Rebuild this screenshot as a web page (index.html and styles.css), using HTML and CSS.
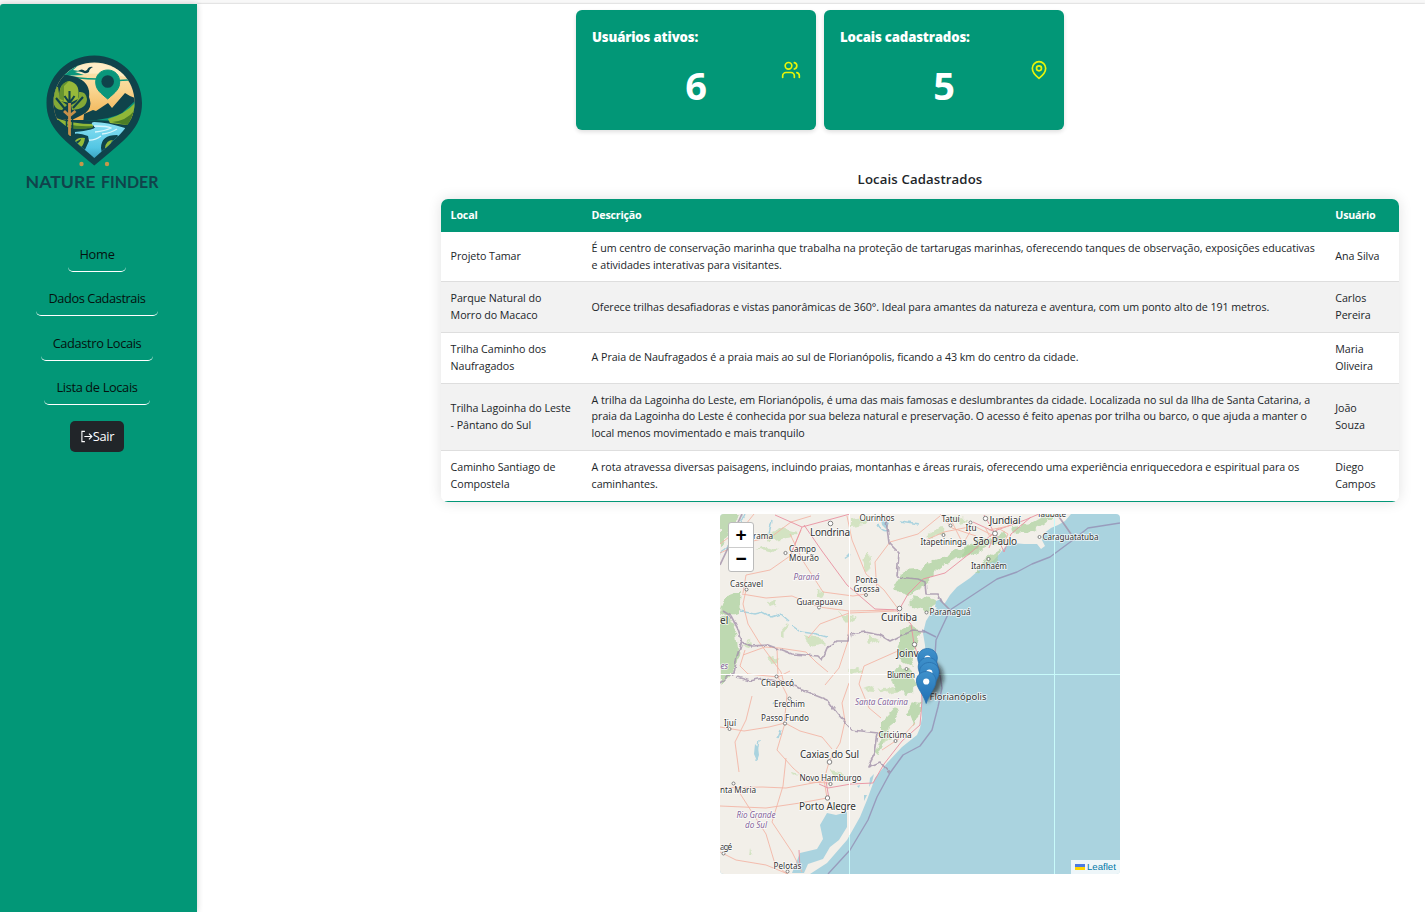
FILE: index.html
```html
<!DOCTYPE html>
<html lang="pt-BR">
<head>
<meta charset="utf-8">
<title>Nature Finder</title>
<link rel="stylesheet" href="styles.css">
</head>
<body>
<div class="app">
  <aside class="sidebar">
    <svg class="logo" viewBox="20 50 145 145" width="145" height="145">
      <defs>
        <clipPath id="pin"><path d="M94.300 62.500C72 62.500 53.500 80 53.500 102C53.500 122 64 132 94.300 158C124 132 134.500 122 134.500 102C134.500 80 117 62.500 94.300 62.500Z"/></clipPath>
        <linearGradient id="sky" x1="0" y1="0" x2="0" y2="1"><stop offset="0" stop-color="#fbe9bd"/><stop offset=".5" stop-color="#f9d590"/><stop offset="1" stop-color="#f0b04e"/></linearGradient>
        <linearGradient id="water" x1="0" y1="0" x2="0" y2="1"><stop offset="0" stop-color="#8be0f2"/><stop offset=".6" stop-color="#53c6e4"/><stop offset="1" stop-color="#2b8ea6"/></linearGradient>
      </defs>
      <path fill="#0f434b" d="M94.300 55.500C67 55.500 46.500 77 46.500 103C46.500 128 63 139 94.300 165.500C126 139 142 128 142 103C142 77 121 55.500 94.300 55.500Z"/>
      <g clip-path="url(#pin)">
        <rect x="50" y="60" width="90" height="60" fill="url(#sky)"/>
        <path fill="#fff1cf" opacity=".7" d="M68 70q30-14 54 2l4 5q-35-8-62 2z"/>
        <path fill="none" stroke="#0a967b" stroke-width="1.500" d="M64 75q14 4 33 4M118 80.500l10-.5"/>
        <path fill="#0a967b" d="M62 76q9-10 19-13l-8 7q5 1 9 1l-7 1q6 2 9 3z"/>
        <path fill="#0f434b" d="M78 71q4-3 7 0l2-1q2-4 6-3q-4 2-4 5q-3 2-5 1q-2-1-6-2z"/>
        <path fill="#0f434b" d="M84 114l9-4 3 1 12-8 4 5 13-15 5 3 8 3v11l-24 11-31 3z"/>
        <path fill="#0a967b" d="M76 121q30 0 46-8l13-12v9l-16 13-28 2z"/>
        <path fill="#0f434b" d="M75 121q33-2 58 2l-10 34H60l-7-36z"/>
        <path fill="#8fb738" d="M108 119q17-5 27-16v14l-8 8-17-2z"/>
        <path fill="#4c7d27" d="M112 122q14-1 22-11v8l-7 6z"/>
        <path fill="#8fb738" d="M56 118q17 6 37 6l0 3q-15 3-26 0z"/>
        <path fill="#487e2c" d="M66 124q14 3 27 2l-1 2q-14 2-21 0z"/>
        <path fill="url(#water)" d="M94 122q-5 1 1 5q0 3-20 5v22l19 11 31-29 0-8q-18-6-31-6z"/>
        <path fill="none" stroke="#d8f6fc" stroke-width="1.300" d="M94 126q14 0 17 2q-6 3-16 4M117 129q-6 4-15 5M101 136q-7 5-13 4"/>
        <path fill="#0f434b" d="M68 136q8-5 20 0l1 5-6 13-17-8zM101 148q0-13 16-13l5 4-20 15z"/>
        <path fill="#94ba38" d="M74 143q2-6 11-5q-1 7-4 9l-4-3q4-3 4-5l-7 4zM105 148q1-8 8-8q-3 3-2 5q-2 2-4 3z"/>
        <path fill="#0f434b" d="M49 83q7-9 18-8l9 2q15 6 13 20q5 12-7 18l-8 4-12 1-12-4z"/>
        <path fill="#97b93a" d="M60 101q-3-17 9-20q12 2 9 18l-8 4z"/>
        <path fill="#65932f" d="M60 99q-2-16 9-18l-5 5v15z"/>
        <path fill="#83a936" d="M53 90q2-4 5-3l2 13 7 5-5 5q-9 0-9-12zM79 92q7-1 8 7q0 10-15 11l-1-5q8-2 8-13z"/>
        <path fill="none" stroke="#0f434b" stroke-width="2.100" d="M69.500 91v14M64.500 96l5 7 5-7M56 98l9 11M83 97l-10 11"/>
        <path fill="none" stroke="#c6914b" stroke-width="2.800" d="M69.500 103v33M64 111l5.500 5 6-5"/>
        <path fill="none" stroke="#0f434b" stroke-width="1.500" d="M66.500 117v19M72.500 118v15"/>
      </g>
      <path fill="#0a967b" stroke="#0a967b" d="M107.700 70c-7 0-12 5-12 12 0 8 5 11 12 17 8-7 12-10 12-17 0-7-5-12-12-12z"/>
      <circle cx="107.700" cy="81.500" r="6.300" fill="#0f434b"/>
      <circle cx="81.500" cy="164" r="2.200" fill="#c6974b"/><circle cx="107" cy="164" r="2.200" fill="#c6974b"/>
      <text class="logo-word" x="25.500" y="188.300" textLength="70" lengthAdjust="spacingAndGlyphs">NATURE</text>
      <text class="logo-word" x="101" y="188.300" textLength="57.500" lengthAdjust="spacingAndGlyphs">FINDER</text>
    </svg>
    <nav class="nav">
      <a class="link home">Home</a>
      <a class="link dados">Dados Cadastrais</a>
      <a class="link cadastro">Cadastro Locais</a>
      <a class="link lista">Lista de Locais</a>
      <button class="exit"><svg viewBox="0 0 24 24" width="13" height="13" fill="none" stroke="#fff" stroke-width="2"><path d="M9 2.500H3.500v19H9M8 12h14M16.500 6.500L22 12l-5.500 5.500"/></svg><span>Sair</span></button>
    </nav>
  </aside>
  <main class="content">
    <section class="cards">
      <div class="card">
        <h2>Usuários ativos:</h2>
        <p>6</p>
        <svg class="ico" viewBox="0 0 24 24"><path d="M16 21v-2a4 4 0 0 0-4-4H6a4 4 0 0 0-4 4v2"/><circle cx="9" cy="7" r="4"/><path d="M22 21v-2a4 4 0 0 0-3-3.870M16 3.130a4 4 0 0 1 0 7.750"/></svg>
      </div>
      <div class="card">
        <h2>Locais cadastrados:</h2>
        <p>5</p>
        <svg class="ico" viewBox="0 0 24 24"><path d="M20 10c0 6-8 12-8 12s-8-6-8-12a8 8 0 0 1 16 0Z"/><circle cx="12" cy="10" r="3"/></svg>
      </div>
    </section>
    <section class="places">
      <h1>Locais Cadastrados</h1>
      <table class="table">
        <colgroup><col class="c1"><col class="c2"><col class="c3"></colgroup>
        <thead><tr><th>Local</th><th>Descrição</th><th>Usuário</th></tr></thead>
        <tbody>
          <tr><td>Projeto Tamar</td><td>É um centro de conservação marinha que trabalha na proteção de tartarugas marinhas, oferecendo tanques de observação, exposições educativas<br>e atividades interativas para visitantes.</td><td>Ana Silva</td></tr>
          <tr><td>Parque Natural do<br>Morro do Macaco</td><td>Oferece trilhas desafiadoras e vistas panorâmicas de 360°. Ideal para amantes da natureza e aventura, com um ponto alto de 191 metros.</td><td>Carlos<br>Pereira</td></tr>
          <tr><td>Trilha Caminho dos<br>Naufragados</td><td>A Praia de Naufragados é a praia mais ao sul de Florianópolis, ficando a 43 km do centro da cidade.</td><td>Maria<br>Oliveira</td></tr>
          <tr><td>Trilha Lagoinha do Leste<br>- Pântano do Sul</td><td>A trilha da Lagoinha do Leste, em Florianópolis, é uma das mais famosas e deslumbrantes da cidade. Localizada no sul da Ilha de Santa Catarina, a<br>praia da Lagoinha do Leste é conhecida por sua beleza natural e preservação. O acesso é feito apenas por trilha ou barco, o que ajuda a manter o<br>local menos movimentado e mais tranquilo</td><td>João<br>Souza</td></tr>
          <tr><td>Caminho Santiago de<br>Compostela</td><td>A rota atravessa diversas paisagens, incluindo praias, montanhas e áreas rurais, oferecendo uma experiência enriquecedora e espiritual para os<br>caminhantes.</td><td>Diego<br>Campos</td></tr>
        </tbody>
      </table>
      <div class="map">
        <svg class="tiles" viewBox="720 514 400 360" width="400" height="360">
          <defs>
            <linearGradient id="mk" x1="0" y1="0" x2="0" y2="1"><stop offset="0" stop-color="#3f91cb"/><stop offset="1" stop-color="#1f6fb5"/></linearGradient>
            <filter id="soft" x="-50%" y="-50%" width="200%" height="200%"><feGaussianBlur stdDeviation="2.200"/></filter>
            <filter id="rough" x="-5%" y="-5%" width="110%" height="110%"><feTurbulence type="fractalNoise" baseFrequency=".12" numOctaves="2" seed="4"/><feDisplacementMap in="SourceGraphic" scale="9" xChannelSelector="R" yChannelSelector="G"/></filter>
            <filter id="wavy" filterUnits="userSpaceOnUse" x="715" y="510" width="410" height="370"><feTurbulence type="fractalNoise" baseFrequency=".15" numOctaves="2" seed="9"/><feDisplacementMap in="SourceGraphic" scale="4" xChannelSelector="R" yChannelSelector="G"/></filter>
            <g id="marker"><path fill="url(#mk)" stroke="#2a71ad" stroke-width=".8" d="M0 .5C-5.500 .5-9.800 4.700-9.800 10c0 7 7 13 9.800 22.500C2.800 23 9.800 17 9.800 10 9.800 4.700 5.500 .5 0 .5z"/><circle cy="10.500" r="3.100" fill="#fff"/></g>
          </defs>
          <rect x="720" y="514" width="400" height="360" fill="#aad3df"/>
          <path fill="#f2efe9" d="M720 514H1071L1065 521 1058 525 1051 528 1043 534 1042 540 1045 546 1041 549 1037 544 1024 544 1013 543 1005 547 1000 553 994 560 980 569 970 578 957 587 950 595 945 603 938 607 931 613 926 621 923 633 925 645 926 660 926 680 922 690 921 705 922 718 920 728 917 735 902 747 887 763 875 778 867 800 860 817 847 840 827 863 810 874H720Z"/>
          <g fill="#add19e" filter="url(#rough)">
            <path opacity=".75" d="M720 615l10 2 7 15 2 18-4 20-15 16zM720 611l5-14 16-6-2 22-10 2zM898 579l6-8 14-1 12-8 13-4 8 3-15 11-14 15-16 9-13-8zM920 567l18-7 20-11 16-5 6 2-12 8-25 10-23 11zM900 630l11-5 10 6-3 15-8 10 4 10-9-4-10-8 5-10zM913 703l8 2-2 13-7 7-5-12z"/>
            <path opacity=".7" d="M720 514h20l-8 14-12 20zM911 594l20 4 8 5-13 8-14-4zM900 664l12 8 5 14-9 8-12-4-6-12zM881 722l9-9 7-8 2 8-9 14-5 14-7 13-3-3 6-14zM964 545l30-8 10-4 3 4-20 11-24 9zM981 562l20-14-6 14-20 10zM1013 526l16-3 13-7 14-2-11 9-14 9-15 2z"/>
          </g>
          <g fill="#c8dfb5" opacity=".75" filter="url(#rough)">
            <path d="M764 536l18-8 16 4-6 5-24 4zM755 549l12-3 12 4-5 3zM768 601l8-1 2 4-8 2zM818 590l7 2-3 5-5-2zM804 635l16 3 8 8-10-2-9 2zM780 632l7-8-2 8-5 5zM850 520l20-3-6 8-14 2zM860 560l10-8 2 14-8 4zM838 612l18 6-8 5zM868 635l10 5-8 5zM768 656l12 4-9 2zM742 645l8-4 2 7zM847 670l12-3 5 4-13 3zM878 690l14-4 8 5-12 3zM832 770l12 3 3 4-14-2zM791 772l10 2-8 2zM880 735l8-4 3 7-8 8zM862 690l10-3 3 4zM750 848l2 7-3 1zM728 843l4 2-4 2zM928 535l14-9 3 6-15 7zM950 520l12-4 4 5-12 3z"/>
          </g>
          <g fill="#aad3df">
            <path d="M827 813l9 2 11-3v15l-8 13-9 7-7 12-15 5-4 9h-12l8-20 17-4 6-10-3-14z"/>
            <path d="M755 744l3 3 1 8-2 6-3-7zM870 778l4-4-2 8-3 5zM864 795l3 0-3 6zM857 786l3-1-1 3zM936 601l5-2 3 5-4 5-5-2zM881 519l8 4-3 6-4-4zM846 556l3-3 1 3z"/>
          </g>
          <path class="river" filter="url(#wavy)" d="M740 611l14 3 8-2 10 5 9-3 8 7M792 625l10 7 14 2 11 3M878 525q6 8 10 5M772 520l-3 14M720 553q14-8 16-22l8-17M900 521l20 3M850 555l-6 4M776 699l-3 5M759 740l-3 20M781 730l-3 8"/>
          <g class="road">
            <path d="M720 553l20-9 31-7 20-15 20-6M743 593l3-18 24-5 20-14 11-26M746 590l-3 14 5 20 11 18 22 30 4 15M742 594l24 4 26-2 27 11 30 4 45-1M743 655l22-8 14 1 27 4 10 10 12 10M745 650l-5 16 8 8 30 3 12-6M777 648l1 29 9 18-3 30M752 696l-6 24-11 22 4 30M720 727l24 4 25-4 16-4 15 8 22 6 10 12M785 723l-8 27 16 18 16 14 20 1M734 784l14 22 18 28 9 30 12 10M720 788l42-1 24 1 43-8M720 806l46 2 34-5 27-5M720 852l16 8 30 5 22 9M786 758l-3 28-11 36 20 30 10 20M829 762l-5 18 3 18M829 761l11-18 5-22-3-18 7-20M897 611l-48 2-29 11-12 14M849 611l-1 30-9 27-14 17M881 718l-12-10-10-24 5-18 36-16M866 594l-13 2-30-4-20-31-13-27M877 592l-2-30 15-20 28-8 22-18M899 610l-15-20-18-16-14-34-5-24M720 544l26-20 8-10M926 540l18-8 30-6 20 10M951 520l12 24 8-14M940 514l12 14 24 8"/>
            <path d="M804 525l18 26 25 34 28 24 24 1 9-16 15-15 22-6 24-19 28-24 28-10 30-13 20-13M897 611l14 13 3 20 6 17 2 40-2 24-18 16-18 23-11 19-22 1-23 4-9-4M802 527l26-7 22-6M802 527l-27-12M802 527l-11 27M995 532l9 20 7-18 20-17M995 532l-22-10M995 532l-6 16M994 532l-10-17M829 799l-3-18M799 850l1 18" stroke="#e9909f"/>
            <path d="M882 750l21-14 12-13M985 527l5 10 8-9 10 6-4 10M989 530l20-4-6-9"/>
          </g>
          <g class="border">
            <path filter="url(#wavy)" d="M723 611l8 5 7 13 4 12-5 16-3 16-8 5-6 5M740 641L752 646 768 645 792 654 818 656 822 660 827 648 837 641 848 641 850 634 865 632 880 635 890 641 902 635 913 631 925 632M737 677L750 681 763 678 785 683 797 687 802 690 827 700 837 713 852 730 878 733 875 753 868 767 880 762 890 773M886 520L889 543 899 553 897 577 918 579 925 582 926 594 938 594 942 602"/>
            <path d="M940 600l10 10M720 565l8-17 7-19 7-15M1057 514l14 20"/>
            <path class="sea" d="M1120 523L1088 528 1073 540 1050 557 1032 564 1017 572 997 579 950 610 936 640 935 656 940 675 942 688 938 707 932 730 920 746 903 755 890 773 877 797 868 820 850 850 828 874M922 630l14 7"/>
          </g>
          <path stroke="#c8fafa" d="M1054.500 514v360M921 674.500h199M849.500 835v39"/>
          <path stroke="#fff" d="M849.500 514v321M720 674.500h201"/>
          <g class="town"><circle cx="830.500" cy="523.500" r="2.300"/><circle cx="785.500" cy="553" r="1.600"/><circle cx="746.500" cy="589.500" r="1.500"/><circle cx="819" cy="607.500" r="1.500"/><circle cx="866" cy="595" r="1.500"/><circle cx="899.500" cy="608.500" r="2.300"/><circle cx="914.500" cy="644.500" r="2.200"/><circle cx="906.500" cy="669" r="1.500"/><circle cx="776.500" cy="676.500" r="1.500"/><circle cx="789.500" cy="698.500" r="1.500"/><circle cx="785" cy="723.500" r="1.600"/><circle cx="729.500" cy="729" r="1.500"/><circle cx="895.500" cy="741" r="1.500"/><circle cx="829.500" cy="762" r="2.300"/><circle cx="830.500" cy="784" r="1.600"/><circle cx="827.500" cy="798" r="2.200"/><circle cx="733.500" cy="783.500" r="1.500"/><circle cx="787.500" cy="871.500" r="1.500"/><circle cx="723.500" cy="853.500" r="1.500"/><circle cx="926.500" cy="612.500" r="1.500"/><circle cx="995" cy="533.500" r="2.400"/><circle cx="985.500" cy="518.500" r="2.200"/><circle cx="950.500" cy="525.500" r="1.500"/><circle cx="970.500" cy="522.500" r="1.500"/><circle cx="943.500" cy="535" r="1.500"/><circle cx="988.500" cy="559" r="1.600"/><circle cx="1039.500" cy="537" r="1.500"/></g>
          <g class="lbl">
            <text x="859.500" y="520.500" textLength="35">Ourinhos</text><text x="753" y="539" textLength="20">rama</text>
            <text class="big" x="810" y="535.500" textLength="40">Londrina</text>
            <text x="789" y="552" textLength="27">Campo</text><text x="789" y="561" textLength="30">Mourão</text>
            <text x="730" y="586.500" textLength="33">Cascavel</text>
            <text x="855.500" y="582.500" textLength="22">Ponta</text><text x="853.500" y="592" textLength="26">Grossa</text>
            <text x="796.500" y="604.500" textLength="46">Guarapuava</text>
            <text class="big" x="881" y="620.500" textLength="36">Curitiba</text>
            <text class="big" x="720" y="624">el</text>
            <text class="big" x="896.500" y="657" textLength="22">Joinv</text>
            <text x="887" y="678" textLength="28">Blumen</text>
            <text x="761" y="685.500" textLength="33">Chapecó</text>
            <text x="774" y="707" textLength="31">Erechim</text>
            <text x="761" y="720.500" textLength="48">Passo Fundo</text>
            <text x="724" y="726" textLength="12">Ijuí</text>
            <text x="878.500" y="738" textLength="33">Criciúma</text>
            <text class="big" x="800" y="758" textLength="59">Caxias do Sul</text>
            <text x="799.500" y="780.500" textLength="62">Novo Hamburgo</text>
            <text x="720" y="793" textLength="36">nta Maria</text>
            <text class="big" x="799" y="809.500" textLength="57">Porto Alegre</text>
            <text x="720" y="850" textLength="12">agé</text>
            <text x="773.500" y="869" textLength="28">Pelotas</text>
            <text x="941.500" y="522" textLength="18">Tatuí</text><text x="965.500" y="531" textLength="11">Itu</text>
            <text class="big" x="989.500" y="523.500" textLength="31">Jundiaí</text>
            <text x="920.500" y="544.500" textLength="46">Itapetininga</text>
            <text class="big" x="973" y="545" textLength="44">São Paulo</text>
            <text x="971" y="568.500" textLength="36">Itanhaém</text>
            <text x="1042.500" y="539.500" textLength="56">Caraguatatuba</text>
            <text x="1037" y="516.500" textLength="29">Taubaté</text>
            <text x="929.500" y="615" textLength="41">Paranaguá</text>
            <g class="state"><text x="793.500" y="580" textLength="26">Paraná</text><text x="720.500" y="669">es</text><text x="855" y="704.500" textLength="53">Santa Catarina</text><text x="736.500" y="817.500" textLength="39">Rio Grande</text><text x="745" y="827.500" textLength="22">do Sul</text></g>
            <text class="city" x="929.500" y="700" textLength="57">Florianópolis</text>
          </g>
          <path fill="#111" opacity=".6" filter="url(#soft)" d="M926 703l4-24 5-18 7 8 2 10-5 12z"/>
          <use href="#marker" x="927.500" y="648"/><use href="#marker" x="928" y="657"/><use href="#marker" x="929.300" y="662"/><use href="#marker" x="926.200" y="671"/>
        </svg>
        <div class="zoom"><span>+</span><span>−</span></div>
        <div class="credit"><svg viewBox="0 0 12 8" width="10" height="6" preserveAspectRatio="none"><path fill="#4c7be1" d="M0 0h12v4H0z"/><path fill="#ffd500" d="M0 4h12v4H0z"/></svg><span>Leaflet</span></div>
      </div>
    </section>
  </main>
</div>
</body>
</html>
```
FILE: styles.css
```css
* { box-sizing: border-box; }
body { margin: 0; background: #f8f8f8; color: #212529; font-family: "Open Sans", "Noto Sans", sans-serif; }
.app { display: flex; height: 912px; padding-top: 4px; overflow: hidden; }
.sidebar { width: 197px; flex: none; background: #029777; border-top-left-radius: 3px; display: flex; flex-direction: column; align-items: center; padding: 46px 5px 0 0; box-shadow: 0 0 6px rgba(0,0,0,.2); z-index: 1; }
.logo { flex: none; margin-right: 7px; }
.logo-word { font: 700 17px Lato, sans-serif; fill: #10434b; }
.nav { display: flex; flex-direction: column; align-items: center; margin-top: 43px; padding-left: 2px; }
.link { height: 34px; margin-bottom: 10.400px; line-height: 33px; font-size: 12.800px; color: #05110e; text-align: center; white-space: nowrap; border-bottom: 1px solid #fff; border-radius: 5px; }
.home { width: 58px; letter-spacing: -.25px; }
.dados { width: 122px; letter-spacing: -.42px; }
.cadastro { width: 112px; letter-spacing: -.35px; line-height: 32px; }
.lista { width: 106px; letter-spacing: -.35px; }
.exit { margin-top: 5px; width: 54px; height: 31px; padding: 0; border: 0; border-radius: 5px; background: #212529; color: #fff; font: 500 12.800px/31px "Open Sans", sans-serif; display: flex; align-items: center; justify-content: center; letter-spacing: -.3px; }
.exit span { margin-top: 1px; }
.content { flex: 1; background: #fff; box-shadow: 0 0 2px rgba(0,0,0,.25); }
.cards { display: flex; gap: 8px; padding: 6px 0 0 379px; }
.card { width: 240px; height: 120px; border-radius: 6px; background: #029777; color: #fff; padding: 17px 16px; box-shadow: 0 2px 4px rgba(0,0,0,.13); display: grid; grid-template-columns: 1fr 20px; grid-template-rows: 20px 1fr; }
.card h2 { margin: 0; grid-column: 1 / 3; font-size: 13.200px; line-height: 20px; font-weight: 800; letter-spacing: -.16px; }
.card p { margin: 18px 0 0 20px; font-size: 38px; line-height: 40px; font-weight: 700; text-align: center; }
.ico { width: 20px; height: 20px; margin-top: 13px; margin-left: .600px; fill: none; stroke: #e8f509; stroke-width: 2; stroke-linecap: round; stroke-linejoin: round; }
.places { width: 958px; margin: 39px 0 0 244px; }
.places h1 { margin: 0; height: 30px; font-size: 13.200px; font-weight: 600; line-height: 20px; letter-spacing: .13px; text-align: center; }
.table { width: 958px; table-layout: fixed; border-collapse: separate; border-spacing: 0; border-radius: 7px; overflow: hidden; box-shadow: 0 0 14px rgba(0,0,0,.12); font-size: 10.700px; line-height: 16.800px; letter-spacing: -.06px; white-space: nowrap; }
.c1 { width: 141px; }
.c2 { width: 744.500px; }
.c3 { width: 72.500px; }
th { padding: 8px 9.600px; background: #029777; color: #fff; text-align: left; font-weight: 700; letter-spacing: -.2px; }
td { padding: 8px 9.600px; border-bottom: 1px solid #dedede; background: #fff; }
th:last-child, td:last-child { padding-left: 8.800px; }
tbody tr:nth-child(even) td { background: #f2f2f2; }
tbody tr:last-child td { border-bottom-color: #029777; }
.map { position: relative; width: 400px; height: 360px; margin: 12.500px auto 0; border-radius: 4px; overflow: hidden; }
.tiles { display: block; }
.road { fill: none; stroke: #f3b5a6; stroke-width: .9; }
.river { fill: none; stroke: #aad3df; stroke-width: 1.400; }
.border { fill: none; stroke: #a392aa; stroke-width: 1.700; opacity: .8; stroke-linejoin: round; }
.sea { stroke: #948fb4; stroke-width: 1.400; }
.town { fill: #fff; stroke: #666; stroke-width: .8; }
.lbl { font: 8.200px "Noto Sans", sans-serif; fill: #333; stroke: rgba(255,255,255,.75); stroke-width: 1.600; paint-order: stroke; }
.big { font-size: 10px; }
.city { font-size: 9.500px; }
.state { font-style: italic; fill: #84649a; }
.zoom { position: absolute; left: 8px; top: 8px; width: 26px; height: 50px; border: 1px solid #bbb; border-radius: 3px; background: #fff; color: #000; font: 700 19px/24px "Liberation Sans", sans-serif; text-align: center; }
.zoom span { display: block; height: 24px; }
.zoom span + span { border-top: 1px solid #ccc; line-height: 22px; }
.credit { position: absolute; right: 0; bottom: 0; height: 14px; width: 49px; background: rgba(255,255,255,.8); display: flex; align-items: center; gap: 2px; padding-left: 4px; color: #0078a8; font: 9.600px/14px "Liberation Sans", sans-serif; }
```
